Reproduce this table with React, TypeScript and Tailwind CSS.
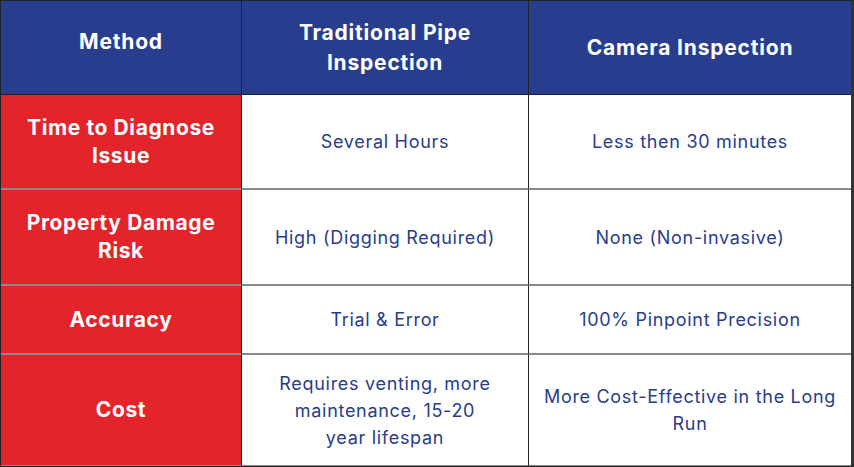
import React from 'react';

type Row = {
  label: string;
  traditional: string;
  camera: string;
  height: string;
};

const rows: Row[] = [
  { label: 'Time to Diagnose Issue', traditional: 'Several Hours', camera: 'Less then 30 minutes', height: 'h-[95px]' },
  { label: 'Property Damage Risk', traditional: 'High (Digging Required)', camera: 'None (Non-invasive)', height: 'h-[96px]' },
  { label: 'Accuracy', traditional: 'Trial & Error', camera: '100% Pinpoint Precision', height: 'h-[69px]' },
  {
    label: 'Cost',
    traditional: 'Requires venting, more maintenance, 15-20 year lifespan',
    camera: 'More Cost-Effective in the Long Run',
    height: 'h-[111px]',
  },
];

export default function App() {
  return (
    <div className="w-[854px] h-[467px] bg-white font-['Inter','Liberation_Sans',sans-serif]">
      <div className="grid grid-cols-[241px_287px_1fr] border border-[#222] border-r-[3px] border-r-[#333]">
        {/* Header */}
        <HeaderCell className="border-r border-[#222] pb-3">Method</HeaderCell>
        <HeaderCell className="border-r border-[#222] px-10">Traditional Pipe Inspection</HeaderCell>
        <HeaderCell>Camera Inspection</HeaderCell>

        {/* Body */}
        {rows.map((row, i) => {
          const last = i === rows.length - 1;
          const line = last ? 'border-b border-[#888]' : 'border-b-2 border-[#8a8a8a]';
          return (
            <React.Fragment key={row.label}>
              <div
                className={`${row.height} ${line} border-r border-r-[#222] bg-[#e3242b] flex items-center justify-center text-center px-5 text-white font-bold text-[21px] leading-[28px] tracking-[0.6px]`}
              >
                {row.label}
              </div>
              <div
                className={`${row.height} ${line} border-r border-r-[#222] flex items-center justify-center text-center px-[30px] text-[#283d8c] text-[18px] leading-[27px] tracking-[0.7px]`}
              >
                {row.traditional}
              </div>
              <div
                className={`${row.height} ${line} flex items-center justify-center text-center px-3 text-[#283d8c] text-[18px] leading-[27px] tracking-[0.7px]`}
              >
                {row.camera}
              </div>
            </React.Fragment>
          );
        })}
      </div>
    </div>
  );
}

function HeaderCell({ children, className = '' }: { children: React.ReactNode; className?: string }) {
  return (
    <div
      className={`h-[94px] border-b border-b-[#222] bg-[#283d8e] flex items-center justify-center text-center text-white font-bold text-[21px] leading-[30px] tracking-[0.8px] ${className}`}
    >
      {children}
    </div>
  );
}
